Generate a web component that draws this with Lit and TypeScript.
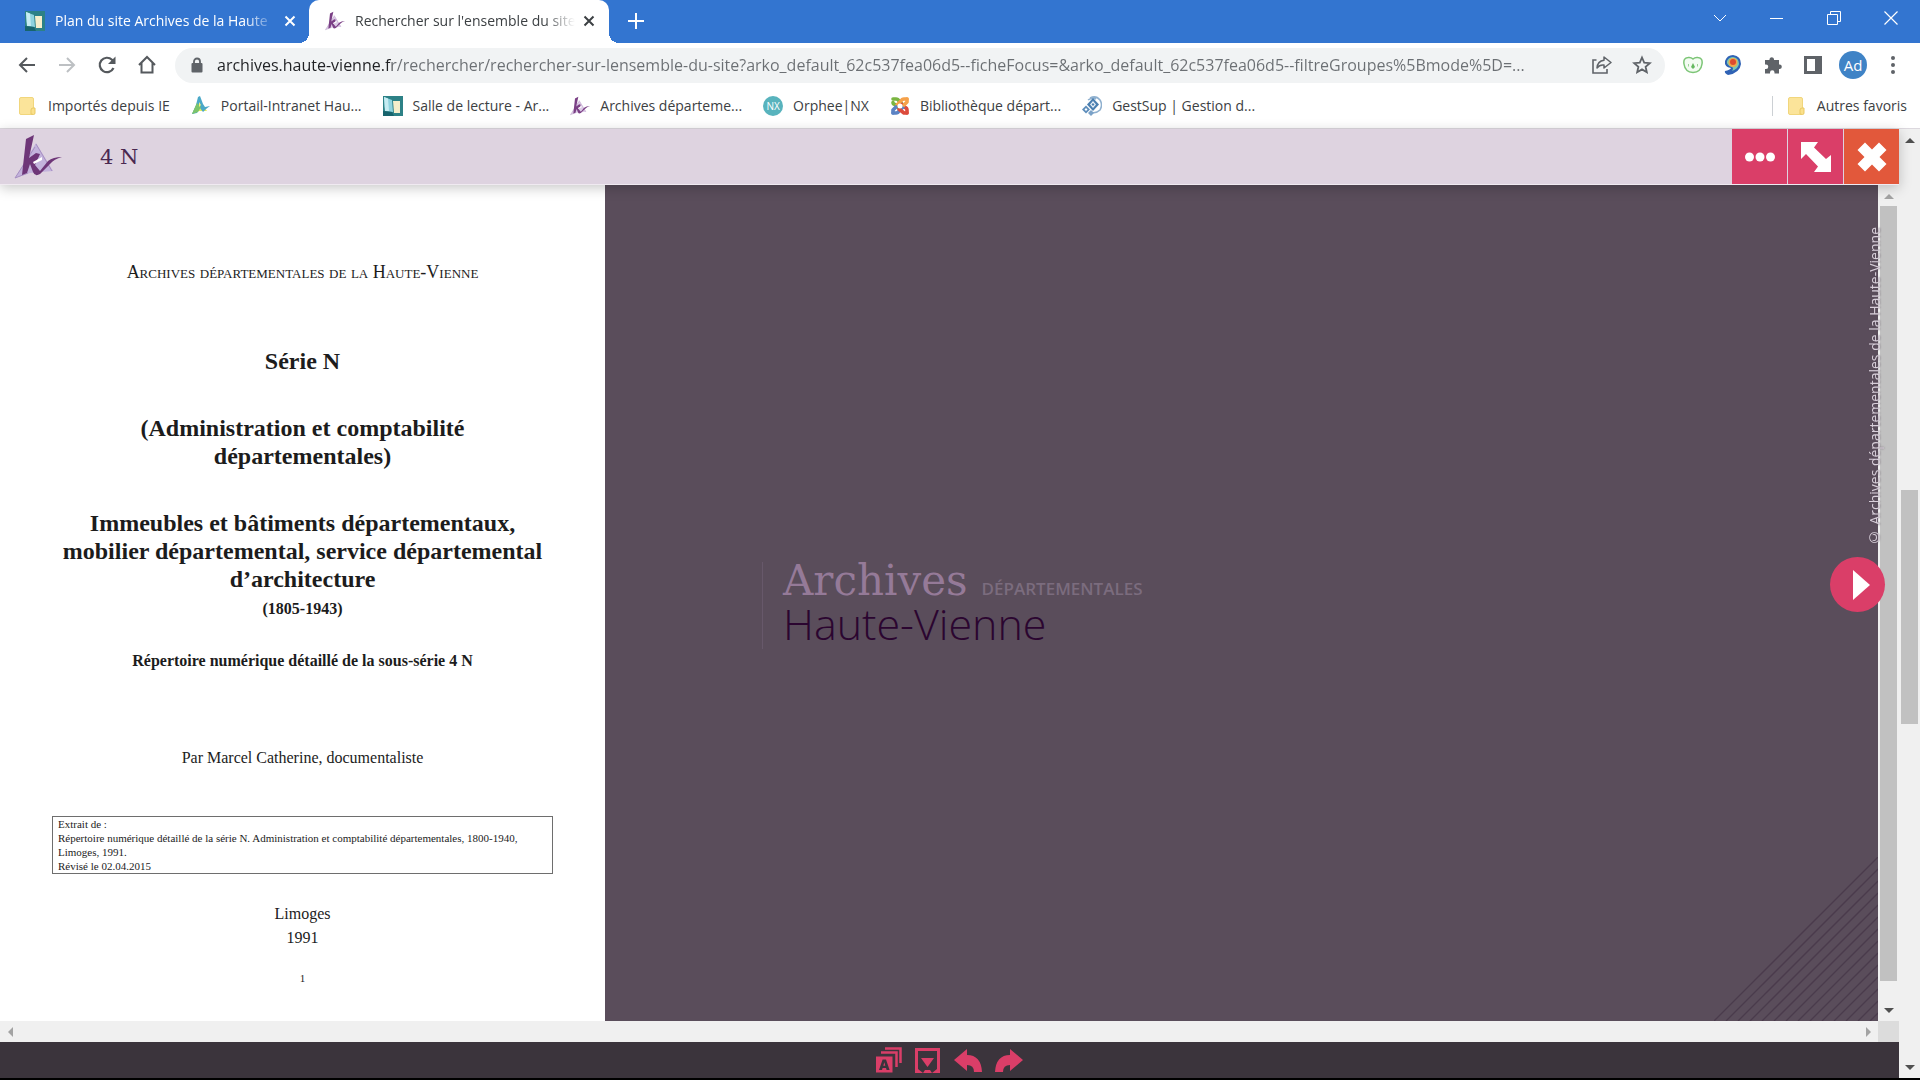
import { LitElement, html, css, svg } from "lit";
import { customElement } from "lit/decorators.js";

const icon = (w: number, h: number, box: string, body: unknown) =>
  html`<svg width=${w} height=${h} viewBox=${box} fill="none" aria-hidden="true">${body}</svg>`;

/* Quill-and-triangle mark, in a main ink and a triangle tint */
const mark = (w: number, h: number, ink: string, tint: string, edge: string) =>
  icon(w, h, "0 0 48 44", svg`
    <path d="M22 8 39 36 16 38 1 43Z" fill=${tint}/>
    <path d="M1 43 21 12M1 43 14 38M22 9 38 36" stroke=${edge} stroke-width="1"/>
    <path d="M12 4 20 0 15 23 22 18 26 19 21 30 26 36 34 26Q39 22 48 22 40 24 36 29L26 39Q21 42 19 37L16 29 13 38 8 40Z" fill=${ink}/>
    <path d="M19 27 28 22 28 25 20 29Z" fill="#fff"/>`);

const bookIcon = icon(20, 20, "0 0 20 20", svg`
  <rect width="20" height="20" fill="#2d8186"/>
  <path d="M1 1 9 4 10 16 2 15Z" fill="#8fd3df"/><path d="M1 1 5 2.500 6 15 2 15Z" fill="#c5ecf2"/>
  <path d="M10 5H17V17H11Z" fill="#f6eecb"/><path d="M0 15 9 16 11 20H0Z" fill="#17646d"/>`);

const folderIcon = icon(20, 20, "0 0 20 20", svg`
  <rect x="1.500" y="1.500" width="14" height="17" rx="1.500" fill="#fbe49a" stroke="#f1d67c"/>
  <path d="M13 18V14Q13 12 15 12H17V17Q17 18.500 15.500 18.500Z" fill="#fbe08a" stroke="#e9c965"/>`);

const portalIcon = icon(20, 20, "0 0 20 20", svg`
  <path d="M8 3 16 15 8 15 1 18Z" fill="#e6ec5a"/>
  <path d="M7 1 9 0 12 8 14 11 19 10 15 13 12 16 9 12 6 17 1 18 5 9Z" fill="#4aa8c8"/>
  <path d="M6 7 10 11 7 16 1 18Z" fill="#7cc46a"/><path d="M8 6 10 9 8 11Z" fill="#f4f07a"/>`);

const nxIcon = html`<span class="nx">NX</span>`;

const joomlaIcon = icon(20, 20, "0 0 20 20", svg`
  <g stroke-width="3.600" stroke-linecap="round" stroke-linejoin="round">
    <path d="M3 6.500Q3 8 5 8.500L8 11.500M3 3 6 3Q8 3 9 5L13 9" stroke="#7ab541"/>
    <path d="M17 3H14Q12 3 11 5L7 9" stroke="#f5a14a"/>
    <path d="M17 17V14Q17 12 15 11.500L12 8.500" stroke="#dc4b3c"/>
    <path d="M3 17H6Q8 17 9 15L13 11" stroke="#5b83c4"/>
    <path d="M17 17H14L9 13" stroke="#dc4b3c"/><path d="M3 17V14L6 11" stroke="#5b83c4"/><path d="M17 3V6L14 9" stroke="#f5a14a"/>
  </g><circle cx="10" cy="10" r="2.500" fill="#fff"/>`);

const gestIcon = icon(20, 20, "0 0 20 20", svg`
  <path d="M8 2Q14-1 18 4 21 9 18 14 14 18 8 16M6 4Q10 1 14 3" stroke="#8fb0cf" stroke-width="1.500"/>
  <path d="M11 2 17 8.500 11 15 5 8.500Z" fill="#4b7fb0"/><path d="M11 5 14 8.500 11 12 8 8.500Z" fill="#e8f0f7"/>
  <path d="M11 7 12.500 8.500 11 10 9.500 8.500Z" fill="#4b7fb0"/>
  <path d="M4 9.500 8 13.500 4 17.500 0 13.500Z" fill="#5d8dbb"/><path d="M4 12 5.500 13.500 4 15 2.500 13.500Z" fill="#fff"/>
  <path d="M9 14 12 17 9 20 6 17Z" fill="#7ba2c8"/>`);

const purpleMark = mark(20, 20, "#7a3f85", "#dccbe6", "#b99bc8");

const bookmarks = [
  { label: "Importés depuis IE", art: folderIcon },
  { label: "Portail-Intranet Hau...", art: portalIcon },
  { label: "Salle de lecture - Ar...", art: bookIcon },
  { label: "Archives départeme...", art: purpleMark },
  { label: "Orphee|NX", art: nxIcon },
  { label: "Bibliothèque départ...", art: joomlaIcon },
  { label: "GestSup | Gestion d...", art: gestIcon },
];

const closeX = icon(12, 12, "0 0 12 12", svg`<path d="M1.500 1.500 10.500 10.500M10.500 1.500 1.500 10.500" stroke="currentColor" stroke-width="2"/>`);

const arrow = (d: string) => icon(10, 10, "0 0 10 10", svg`<path d=${d} fill="currentColor"/>`);
const UP = "M0 8 5 3 10 8Z";
const DOWN = "M0 2 5 7 10 2Z";
const LEFT = "M7 0 2 5 7 10Z";
const RIGHT = "M3 0 8 5 3 10Z";

const hatchStep = 12;
const hatchLines = Array.from({ length: 14 }, (_, i) => i * hatchStep);

@customElement("browser-chrome")
class BrowserChrome extends LitElement {
  static styles = css`
    :host { display: block; font-family: "Open Sans", "Noto Sans", sans-serif; color: #3c4043; }
    * { box-sizing: border-box; }
    svg { display: block; flex: none; }
    button { border: 0; padding: 0; background: none; font: inherit; color: inherit; display: flex; align-items: center; justify-content: center; }
    .strip { display: flex; height: 43px; background: #3375d0; color: #fff; }
    .tab { display: flex; align-items: center; width: 300px; padding: 0 14px 2px 16px; font-size: 14px; }
    .tab.first { width: 309px; padding-left: 25px; padding-right: 13px; }
    .tab.active { position: relative; background: #fff; color: #3c4043; border-radius: 10px 10px 0 0; }
    .tab.active::before, .tab.active::after { content: ""; position: absolute; bottom: 0; width: 10px; height: 10px; }
    .tab.active::before { right: 100%; background: radial-gradient(circle at 0 0, transparent 10px, #fff 10px); }
    .tab.active::after { left: 100%; background: radial-gradient(circle at 100% 0, transparent 10px, #fff 10px); }
    .title { flex: 1; min-width: 0; justify-content: flex-start; margin: 0 8px 0 10px; white-space: nowrap; -webkit-mask-image: linear-gradient(90deg, #000 86%, transparent); mask-image: linear-gradient(90deg, #000 86%, transparent); }
    .newtab { width: 54px; padding-bottom: 2px; }
    .windows { display: flex; margin-left: auto; padding-right: 1px; }
    .windows button { width: 57px; padding-bottom: 7px; }
    .toolbar { display: flex; align-items: center; height: 45px; background: #fff; color: #5f6368; padding: 0 7px 1px 7px; }
    .toolbar > button { width: 40px; height: 36px; }
    .omnibox { flex: 1; display: flex; align-items: center; height: 35px; margin: 0 8px; padding: 0 3px 0 14px; border-radius: 18px; background: #f1f3f4; }
    .omnibox button { width: 40px; height: 34px; }
    .url { flex: 1; min-width: 0; margin-left: 12px; padding: 0; border: 0; outline: 0; font-family: inherit; font-size: 16px; line-height: 28px; height: 28px; color: transparent; background: linear-gradient(90deg, #202124 175px, #6b6f73 175px); -webkit-background-clip: text; background-clip: text; }
    .avatar { width: 28px; height: 28px; border-radius: 50%; background: #3f83c6; color: #fff; font-size: 15px; display: grid; place-items: center; }
    .bookmarks { display: flex; align-items: center; gap: 21px; height: 41px; padding: 0 13px 4px 18px; background: #fff; border-bottom: 1px solid #dcd8de; font-size: 14px; }
    .bookmarks a { display: flex; align-items: center; gap: 10px; color: inherit; text-decoration: none; white-space: nowrap; line-height: 20px; }
    .bookmarks .others { margin-left: auto; padding-left: 14px; border-left: 1px solid #ccd0d4; }
    .nx { display: grid; place-items: center; width: 20px; height: 20px; border-radius: 50%; background: #58b3bd; color: #fff; font-size: 10px; }
  `;

  render() {
    return html`
      <div class="strip">
        <div class="tab first">
          ${bookIcon}<button class="title" type="button">Plan du site Archives de la Haute</button>
          <button type="button" aria-label="Fermer l'onglet">${closeX}</button>
        </div>
        <div class="tab active">
          ${purpleMark}<button class="title" type="button">Rechercher sur l'ensemble du site</button>
          <button type="button" aria-label="Fermer l'onglet">${closeX}</button>
        </div>
        <button class="newtab" type="button" aria-label="Nouvel onglet">${icon(16, 16, "0 0 16 16", svg`<path d="M8 0V16M0 8H16" stroke="#fff" stroke-width="2"/>`)}</button>
        <div class="windows">
          <button type="button" aria-label="Rechercher dans les onglets">${icon(14, 14, "0 0 14 14", svg`<path d="M1 4 7 10 13 4" stroke="#fff"/>`)}</button>
          <button type="button" aria-label="Réduire">${icon(14, 14, "0 0 14 14", svg`<path d="M0 7.500H13" stroke="#fff"/>`)}</button>
          <button type="button" aria-label="Restaurer">${icon(14, 14, "0 0 14 14", svg`<path d="M.5 3.500H10.500V13.500H.5ZM3.500 3.500V.5H13.500V10.500H10.500" stroke="#fff"/>`)}</button>
          <button type="button" aria-label="Fermer">${icon(14, 14, "0 0 14 14", svg`<path d="M.5.5 13.500 13.500M13.500.5.5 13.500" stroke="#fff" stroke-width="1.200"/>`)}</button>
        </div>
      </div>
      <div class="toolbar">
        <button type="button" aria-label="Précédent">${icon(20, 20, "0 0 20 20", svg`<path d="M18 10H3M10 3 3 10 10 17" stroke="#55595d" stroke-width="2"/>`)}</button>
        <button type="button" aria-label="Suivant">${icon(20, 20, "0 0 20 20", svg`<path d="M2 10H17M10 3 17 10 10 17" stroke="#bdc0c3" stroke-width="2"/>`)}</button>
        <button type="button" aria-label="Actualiser">${icon(20, 20, "0 0 20 20", svg`<path d="M16.500 13A7.200 7.200 0 1 1 15 4.800L17 7" stroke="#55595d" stroke-width="2.200"/><path d="M18.500 1.500V9H11Z" fill="#55595d"/>`)}</button>
        <button type="button" aria-label="Accueil">${icon(20, 20, "0 0 20 20", svg`<path d="M2 10 10 2 18 10M4.500 8V17.500H15.500V8" stroke="#55595d" stroke-width="2"/>`)}</button>
        <div class="omnibox">
          ${icon(16, 16, "0 0 16 16", svg`<rect x="2.500" y="6" width="11" height="9.500" rx="1" fill="#5f6368"/><path d="M5 7V4.500A3 3 0 0 1 11 4.500V7" stroke="#5f6368" stroke-width="1.800"/>`)}
          <input class="url" type="text" aria-label="Adresse" readonly value="archives.haute-vienne.fr/rechercher/rechercher-sur-lensemble-du-site?arko_default_62c537fea06d5--ficheFocus=&arko_default_62c537fea06d5--filtreGroupes%5Bmode%5D=..." />
          <button type="button" aria-label="Partager">${icon(20, 18, "0 0 20 18", svg`<path d="M4.500 4H1V17H15V13" stroke="#5f6368" stroke-width="1.600"/><path d="M12 1 19 6.500 12 12V9Q7.500 8.500 5 12 5.500 5 12 4.200Z" stroke="#5f6368" stroke-width="1.500" stroke-linejoin="round"/>`)}</button>
          <button type="button" aria-label="Ajouter aux favoris">${icon(20, 20, "0 0 20 20", svg`<path d="M10 2.500 12.200 7.600 17.800 8.100 13.600 11.800 14.800 17.200 10 14.400 5.200 17.200 6.400 11.800 2.200 8.100 7.800 7.600Z" stroke="#5f6368" stroke-width="1.800"/>`)}</button>
        </div>
        <button type="button" aria-label="Extension de sécurité">${icon(20, 18, "0 0 20 18", svg`<path d="M1 8Q0 2 5 1.500 8 1 10 3 12 1 15 1.500 20 2 19 8 18 16 10 16.500 2 16 1 8Z" fill="#f3fbf2" stroke="#7cc576" stroke-width="1.500"/><path d="M10 7 12 11 10 13 8 11Z" fill="#65b85f"/><path d="M5.500 8V10.500M14.500 8V10.500" stroke="#9bd496"/>`)}</button>
        <button type="button" aria-label="Extension de capture">${icon(18, 20, "0 0 18 20", svg`<path d="M9 0Q17 1 17 9 16 18 4 20 0 18 1 16 6 15 7 13 0 12 1 6 3 0 9 0Z" fill="#2f62b5"/><path d="M9 2Q15 3 15 9 14 14 8 16 10 13 8 12 2 10 3 6 5 2 9 2Z" fill="#7cc8b2"/><circle cx="9" cy="7.500" r="4.500" fill="#f1a94a"/><circle cx="9" cy="7" r="3" fill="#dd4b2f"/>`)}</button>
        <button type="button" aria-label="Extensions">${icon(20, 20, "0 0 20 20", svg`<path d="M2 5H6.500V4A2.300 2.300 0 0 1 11 4V5H16V9.500H17A2.300 2.300 0 0 1 17 14H16V18.500H11.500V17.500A2.200 2.200 0 0 0 7 17.500V18.500H2V14H3A2.200 2.200 0 0 0 3 9.500H2Z" fill="#5f6368"/>`)}</button>
        <button type="button" aria-label="Panneau latéral">${icon(18, 18, "0 0 18 18", svg`<path d="M0 0H18V18H0ZM3 3V15H11V3Z" fill="#5f6368" fill-rule="evenodd"/>`)}</button>
        <button type="button" aria-label="Profil"><span class="avatar">Ad</span></button>
        <button type="button" aria-label="Menu">${icon(4, 18, "0 0 4 18", svg`<circle cx="2" cy="2" r="2" fill="#5f6368"/><circle cx="2" cy="9" r="2" fill="#5f6368"/><circle cx="2" cy="16" r="2" fill="#5f6368"/>`)}</button>
      </div>
      <nav class="bookmarks">
        ${bookmarks.map((b) => html`<a href="#">${b.art}<span>${b.label}</span></a>`)}
        <a class="others" href="#">${folderIcon}<span>Autres favoris</span></a>
      </nav>`;
  }
}

@customElement("scroll-track")
class ScrollTrack extends LitElement {
  static properties = { before: { type: Number }, size: { type: Number }, after: { type: Number }, axis: { type: String }, dimStart: { type: Boolean }, dimEnd: { type: Boolean } };
  declare before: number;
  declare size: number;
  declare after: number;
  declare axis: string;
  declare dimStart: boolean;
  declare dimEnd: boolean;

  static styles = css`
    :host { display: block; background: #f0f0f0; }
    .track { display: flex; flex-direction: column; height: 100%; width: 21px; }
    .track.row { flex-direction: row; width: 100%; height: 21px; }
    button { flex: none; display: grid; place-items: center; width: 21px; height: 21px; padding: 0; border: 0; background: none; color: #505050; }
    button.dim { color: #a3a3a3; }
    svg { display: block; }
    .rail { flex: 1; display: flex; flex-direction: inherit; }
    .thumb { margin: 0 2px; background: #c1c1c1; }
  `;

  render() {
    const row = this.axis === "x";
    return html`<div class="track ${row ? "row" : ""}">
      <button class=${this.dimStart ? "dim" : ""} type="button" aria-label=${row ? "Défiler à gauche" : "Défiler vers le haut"}>${arrow(row ? LEFT : UP)}</button>
      <div class="rail">
        <div style="flex:${this.before ?? 1}"></div>
        ${this.size ? html`<div class="thumb" style="flex:${this.size}"></div>` : ""}
        <div style="flex:${this.after ?? 0}"></div>
      </div>
      <button class=${this.dimEnd ? "dim" : ""} type="button" aria-label=${row ? "Défiler à droite" : "Défiler vers le bas"}>${arrow(row ? RIGHT : DOWN)}</button>
    </div>`;
  }
}

@customElement("document-page")
class DocumentPage extends LitElement {
  static styles = css`
    :host { display: block; background: #fff; color: #1c1c1c; font-family: "Liberation Serif", serif; text-align: center; font-size: 16px; line-height: 20px; }
    p, h1, h2 { margin: 0; }
    .page { padding: 77px 52px 0; }
    .owner { font-variant: small-caps; font-size: 18px; }
    h1, h2 { font-size: 24px; line-height: 28px; font-weight: bold; }
    h1 { margin-top: 65px; }
    h2 { margin-top: 39px; }
    .dates { margin-top: 6px; font-weight: bold; }
    .kind { margin-top: 32px; font-weight: bold; }
    .author { margin-top: 77px; }
    .source { margin-top: 48px; padding: 0 5px; border: 1px solid #6e6e6e; text-align: left; font-size: 11px; line-height: 14px; }
    .imprint { margin-top: 28px; line-height: 24px; }
    .folio { margin-top: 20px; font-size: 11px; line-height: 16px; }
  `;

  render() {
    return html`<article class="page">
      <p class="owner">Archives départementales de la Haute-Vienne</p>
      <h1>Série N</h1>
      <h2>(Administration et comptabilité<br />départementales)</h2>
      <h2>Immeubles et bâtiments départementaux,<br />mobilier départemental, service départemental<br />d’architecture</h2>
      <p class="dates">(1805-1943)</p>
      <p class="kind">Répertoire numérique détaillé de la sous-série 4 N</p>
      <p class="author">Par Marcel Catherine, documentaliste</p>
      <p class="source">Extrait de :<br />Répertoire numérique détaillé de la série N. Administration et comptabilité départementales, 1800-1940,<br />Limoges, 1991.<br />Révisé le 02.04.2015</p>
      <p class="imprint">Limoges<br />1991</p>
      <p class="folio">1</p>
    </article>`;
  }
}

@customElement("app-root")
class AppRoot extends LitElement {
  static styles = css`
    :host { display: flex; flex-direction: column; min-height: 100vh; background: #000; font-family: "Open Sans", "Noto Sans", sans-serif; }
    * { box-sizing: border-box; }
    svg { display: block; }
    button { border: 0; padding: 0; background: none; }
    .body { flex: 1; display: flex; margin-bottom: 2px; }
    .viewer { flex: 1; min-width: 0; display: flex; flex-direction: column; }
    .head { position: relative; z-index: 1; display: flex; align-items: center; height: 56px; background: #ded3e0; border-bottom: 1px solid #f0eaf1; box-shadow: 0 3px 12px rgba(0, 0, 0, 0.22); }
    .logo { margin-left: 14px; }
    .name { margin: 0 0 0 38px; font-family: "DejaVu Serif", serif; font-size: 21px; font-weight: normal; color: #4a2850; line-height: 28px; }
    .actions { display: flex; gap: 1px; margin-left: auto; }
    .actions button { display: grid; place-items: center; width: 55px; height: 55px; background: #da3e68; }
    .actions .close { background: #e2583b; }
    .stage { position: relative; flex: 1; display: flex; }
    .canvas { flex: 1; display: grid; grid-template-columns: 605fr 1273fr; min-width: 0; background: #5a4d5b; }
    document-page { min-width: 0; }
    .backdrop { position: relative; min-width: 0; padding: 377px 0 0 157px; overflow: hidden; }
    .brand { display: inline-flex; flex-direction: column; padding-left: 20px; border-left: 1px solid #67586a; }
    .brand-top { display: flex; align-items: baseline; gap: 14px; height: 37px; line-height: 37px; }
    .brand-name { font-family: "DejaVu Serif", serif; font-size: 42px; color: #957a98; }
    .brand-kind { font-size: 17px; font-weight: 600; color: #7b6c7e; }
    .brand-place { font-weight: 300; font-size: 43px; line-height: 50px; color: #2b0530; }
    .hatch { position: absolute; right: 0; bottom: 0; }
    .credit { position: absolute; right: 17px; top: 42px; writing-mode: vertical-rl; transform: rotate(180deg); font-size: 14px; font-weight: 500; line-height: 14px; color: #d8cfda; text-shadow: 0 0 2px #5a4d5b; white-space: nowrap; }
    .next { position: absolute; right: 14px; top: 372px; display: grid; place-items: center; width: 55px; height: 55px; border-radius: 50%; background: #da3e68; }
    .across { display: flex; }
    .across scroll-track { flex: 1; }
    .corner { width: 21px; background: #dcdcdc; }
    .tools { display: flex; align-items: center; justify-content: center; gap: 13px; height: 36px; background: #3b343c; }
    .tools button { display: grid; place-items: center; }
  `;

  render() {
    return html`
      <browser-chrome></browser-chrome>
      <main class="body">
        <section class="viewer">
          <header class="head">
            <div class="logo">${mark(48, 44, "#6e3678", "#c3b3dc", "#a78fc2")}</div>
            <h1 class="name">4 N</h1>
            <div class="actions">
              <button type="button" aria-label="Plus d'options">${icon(30, 10, "0 0 30 10", svg`<circle cx="4.500" cy="5" r="4.500" fill="#fff"/><circle cx="15" cy="5" r="4.500" fill="#fff"/><circle cx="25.500" cy="5" r="4.500" fill="#fff"/>`)}</button>
              <button type="button" aria-label="Agrandir">${icon(30, 30, "0 0 30 30", svg`<path d="M0 0H17L13 5.500 25 17 30 13V30H13L17 24.500 5 12 0 17Z" fill="#fff"/>`)}</button>
              <button class="close" type="button" aria-label="Fermer">${icon(30, 30, "0 0 30 30", svg`<path d="M8 .5 15 7.500 22 .5 29.500 8 22.500 15 29.500 22 22 29.500 15 22.500 8 29.500.5 22 7.500 15 .5 8Z" fill="#fff"/>`)}</button>
            </div>
          </header>
          <div class="stage">
            <div class="canvas">
              <document-page></document-page>
              <div class="backdrop">
                <div class="brand">
                  <div class="brand-top"><span class="brand-name">Archives</span><span class="brand-kind">DÉPARTEMENTALES</span></div>
                  <span class="brand-place">Haute-Vienne</span>
                </div>
                <svg class="hatch" width="164" height="164" viewBox="0 0 164 164" aria-hidden="true">
                  ${hatchLines.map((o) => svg`<path d="M${o} 164 164 ${o}" stroke="#4a3b4c" stroke-width="1.300"/>`)}
                </svg>
              </div>
            </div>
            <scroll-track .before=${0} .size=${775} .after=${19} .dimStart=${true}></scroll-track>
            <span class="credit">© Archives départementales de la Haute-Vienne</span>
            <button class="next" type="button" aria-label="Page suivante">${icon(30, 30, "0 0 30 30", svg`<path d="M10 0 27 15 10 30Z" fill="#fff"/>`)}</button>
          </div>
          <div class="across"><scroll-track axis="x" .dimStart=${true} .dimEnd=${true}></scroll-track><div class="corner"></div></div>
          <footer class="tools">
            <button type="button" aria-label="Vignettes">${icon(26, 26, "0 0 26 26", svg`<path d="M9 1.500H24.500V16M5 5.500H20.500V20" stroke="#da3e68" stroke-width="2.500"/><path d="M0 9.500H16.500V25.500H0ZM3 23H6L6.600 21H10L10.600 23H13.600L10 12.500H6.600ZM7.300 18.800 8.300 15.300 9.300 18.800Z" fill="#da3e68" fill-rule="evenodd"/>`)}</button>
            <button type="button" aria-label="Télécharger">${icon(26, 26, "0 0 26 26", svg`<path d="M0 1H25V26H17L22 22V4H3V22L8 26H0Z" fill="#da3e68"/><path d="M6 11H19L12.500 20Z" fill="#da3e68"/><path d="M8 26 10 23H15L17 26Z" fill="#da3e68"/>`)}</button>
            <button type="button" aria-label="Rotation à gauche">${icon(28, 26, "0 0 28 26", svg`<path d="M0 13 13 2V8Q27 8 28 25H20Q20 18 13 18V24Z" fill="#da3e68"/>`)}</button>
            <button type="button" aria-label="Rotation à droite">${icon(28, 26, "0 0 28 26", svg`<path d="M28 13 15 2V8Q1 8 0 25H8Q8 18 15 18V24Z" fill="#da3e68"/>`)}</button>
          </footer>
        </section>
        <scroll-track .before=${340} .size=${235} .after=${333}></scroll-track>
      </main>`;
  }
}
